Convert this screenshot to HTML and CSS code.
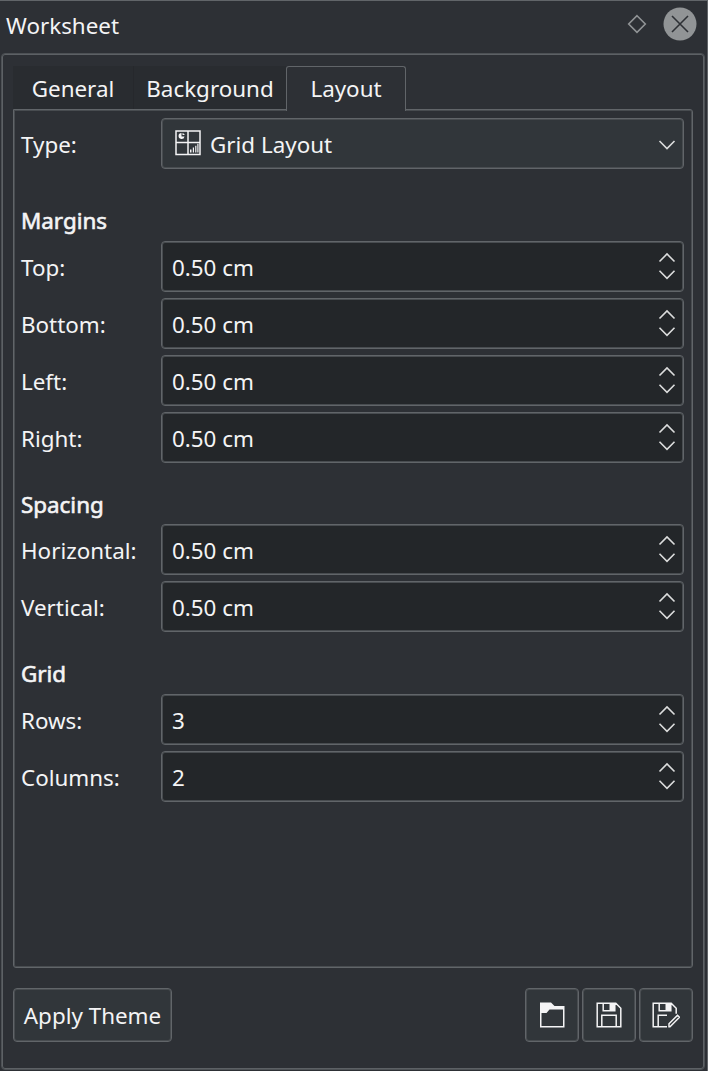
FILE: index.html
```html
<!DOCTYPE html>
<html lang="en">
<head>
<meta charset="utf-8">
<title>Worksheet</title>
<link rel="stylesheet" href="styles.css">
</head>
<body>
<svg class="defs" width="0" height="0">
  <symbol id="spin" viewBox="0 0 18 28"><path d="M1.500 9.500 9 2l7.500 7.500M1.500 18.800 9 26.300l7.500-7.500"/></symbol>
</svg>
<div class="dock">
  <header class="titlebar">
    <h1 class="title">Worksheet</h1>
    <svg class="float-icon" width="20" height="20" viewBox="0 0 20 20"><path d="M10 1.700 18.300 10 10 18.300 1.700 10z"/></svg>
    <svg class="close-icon" width="34" height="34" viewBox="0 0 34 34"><circle cx="17" cy="17" r="16.500"/><path d="M9 9l16 16M25 9 9 25"/></svg>
  </header>
  <main class="panel">
    <nav class="tabs">
      <div class="tab tab-general">General</div>
      <div class="tab tab-background">Background</div>
      <div class="tab tab-active">Layout</div>
    </nav>
    <section class="page">
      <div class="row">
        <label class="label">Type:</label>
        <div class="combo">
          <svg class="grid-icon" width="26" height="26" viewBox="0 0 26 26"><path class="line" d="M1 1h24v23.500H1zM13 1v23.500M1 12.500h24"/><path class="fill" d="M6.500 3a3 3 0 1 0 3 3.500h-3zM7.500 3v2h2.300A3 3 0 0 0 7.500 3zM15 19.500h1.500v3H15zM17.800 17.500h1.200v5h-1.200zM20.200 15.800h1.200v6.700h-1.200zM22.300 13.800h1.200v8.700h-1.200z"/></svg>
          <span>Grid Layout</span>
          <svg class="arrow" width="18" height="12" viewBox="0 0 18 12"><path d="M1.500 2 9 9.500 16.500 2"/></svg>
        </div>
      </div>
      <h2 class="heading heading-margins">Margins</h2>
      <div class="rows">
        <div class="row"><label class="label">Top:</label><div class="spin">0.50 cm<svg class="steps"><use href="#spin"/></svg></div></div>
        <div class="row"><label class="label">Bottom:</label><div class="spin">0.50 cm<svg class="steps"><use href="#spin"/></svg></div></div>
        <div class="row"><label class="label">Left:</label><div class="spin">0.50 cm<svg class="steps"><use href="#spin"/></svg></div></div>
        <div class="row"><label class="label">Right:</label><div class="spin">0.50 cm<svg class="steps"><use href="#spin"/></svg></div></div>
      </div>
      <h2 class="heading heading-spacing">Spacing</h2>
      <div class="rows">
        <div class="row"><label class="label">Horizontal:</label><div class="spin">0.50 cm<svg class="steps"><use href="#spin"/></svg></div></div>
        <div class="row"><label class="label">Vertical:</label><div class="spin">0.50 cm<svg class="steps"><use href="#spin"/></svg></div></div>
      </div>
      <h2 class="heading heading-grid">Grid</h2>
      <div class="rows">
        <div class="row"><label class="label">Rows:</label><div class="spin">3<svg class="steps"><use href="#spin"/></svg></div></div>
        <div class="row"><label class="label">Columns:</label><div class="spin">2<svg class="steps"><use href="#spin"/></svg></div></div>
      </div>
    </section>
    <footer class="actions">
      <button class="button apply">Apply Theme</button>
      <button class="button tool" aria-label="Open"><svg width="28" height="28" viewBox="0 0 28 28"><path class="fill" d="M2 1.500h11l3.500 3.500H26.500v21.500H2zM3.500 12v13H25V8.500H11.500L8.500 12z" fill-rule="evenodd"/></svg></button>
      <button class="button tool" aria-label="Save"><svg width="28" height="28" viewBox="0 0 28 28"><path class="line" d="M2.200 2.200h18.600l5 5v18.600H2.200zM8.200 2.200v7.600h11.600V2.200M6.800 25.800V14.200h14.400v11.600"/><path class="fill" d="M14.500 2h5.500v7h-5.500z"/></svg></button>
      <button class="button tool" aria-label="Save as"><svg width="28" height="28" viewBox="0 0 28 28"><path class="line" d="M15 25.800H1.200V2.200h18l5 5v5.500M7.200 2.200v7.600h11.600V2.200M6.200 25.800V14.200H15M17 25.800v-3l8.500-8.500 2 2-9.500 9.500z"/><path class="fill" d="M13.500 2H19v7h-5.500z"/></svg></button>
    </footer>
  </main>
</div>
</body>
</html>
```
FILE: styles.css
```css
* { box-sizing: border-box; }
body {
  margin: 0;
  background: #2d3035;
  color: #f4f4f5;
  font: 22.4px/30px "Noto Sans", sans-serif;
}
.defs { display: block; height: 0; }
.dock {
  width: 708px;
  height: 1071px;
  border-top: 1px solid #616569;
  border-right: 1px solid #616569;
  padding-left: 1px;
}
.titlebar {
  height: 52px;
  display: flex;
  align-items: flex-start;
  padding: 6px 10px 0 5px;
}
.title { margin: 4px auto 0 0; font-size: inherit; font-weight: 400; }
.float-icon { margin: 7px 16px 0 0; }
.float-icon path { fill: none; stroke: #919496; stroke-width: 1.6; }
.close-icon circle { fill: #919496; }
.close-icon path { fill: none; stroke: #2d3035; stroke-width: 1.6; }
.panel {
  width: 704px;
  height: 1017px;
  border: 1px solid #4d5155;
  box-shadow: inset 0 0 0 1px #5d6165;
  border-radius: 4px;
  padding: 12px 11px 0;
}
.tabs { display: flex; height: 43px; }
.tab { padding-top: 8px; text-align: center; background: #292c30; }
.tab-general { width: 121px; border-right: 1px solid #26282c; }
.tab-background { width: 152px; }
.tab-active {
  width: 120px;
  height: 45px;
  position: relative;
  background: #2d3035;
  border: 1px solid #616569;
  border-bottom: 0;
  border-radius: 3px 3px 0 0;
  padding-top: 7px;
}
.page {
  height: 859px;
  border: 1px solid #616569;
  box-shadow: inset 0 0 0 1px #484c50;
  border-radius: 0 3px 3px 3px;
  padding: 8px 8px 0 7px;
}
.row { display: flex; align-items: center; height: 51px; }
.rows { display: grid; gap: 6px; }
.label { width: 140px; padding-top: 2px; }
.combo, .spin {
  flex: 1;
  height: 51px;
  display: flex;
  align-items: center;
  border: 1px solid #616569;
  box-shadow: inset 0 0 0 1px #484c50;
  border-radius: 4px;
  padding: 2px 7px 0 10px;
}
.spin { background: #232629; }
.combo { background: #31363a; gap: 9px; padding-left: 13px; }
.grid-icon { margin-top: -3px; }
.steps { width: 18px; height: 28px; margin: -3px 0 0 auto; fill: none; stroke: #dcdddd; stroke-width: 1.6; }
.arrow { margin-left: auto; fill: none; stroke: #dcdddd; stroke-width: 1.6; }
.line { fill: none; stroke: #f4f4f5; stroke-width: 1.5; }
.fill { fill: #f4f4f5; }
.heading { margin: 0; font-size: inherit; font-weight: 400; -webkit-text-stroke: 0.6px #f4f4f5; }
.heading-margins { padding: 37px 0 5px; }
.heading-spacing { padding: 27px 0 4px; }
.heading-grid { padding: 27px 0 5px; }
.actions { display: flex; align-items: center; gap: 3px; padding-top: 20px; }
.button {
  height: 54px;
  padding: 2px 0 0;
  display: flex;
  align-items: center;
  justify-content: center;
  background: #31363a;
  border: 1px solid #616569;
  box-shadow: inset 0 0 0 1px #484c50;
  border-radius: 4px;
  color: inherit;
  font: inherit;
}
.apply { width: 159px; margin-right: auto; }
.tool { width: 54px; padding: 0; }
```
